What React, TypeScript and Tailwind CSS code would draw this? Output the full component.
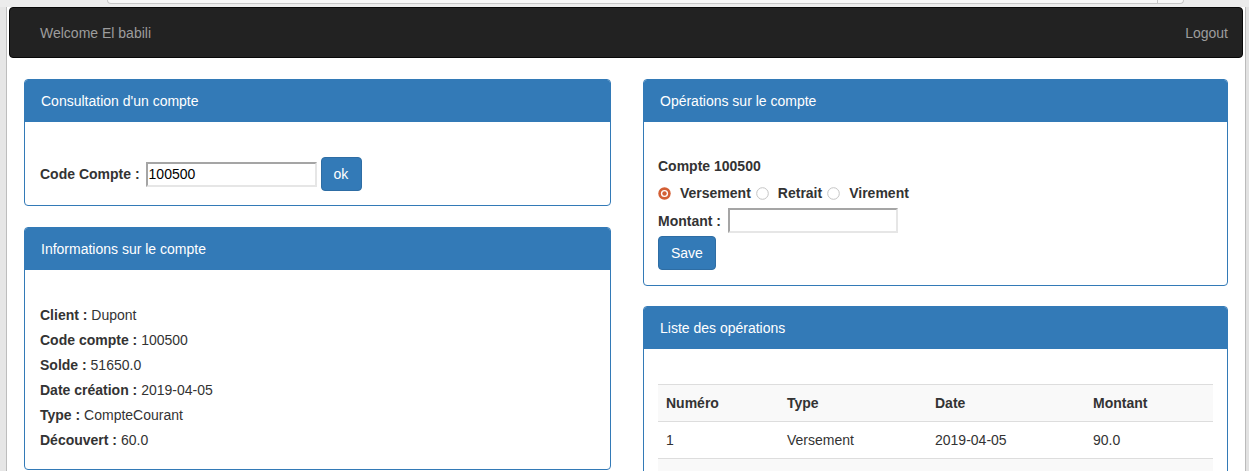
import React from "react";

type Op = { numero: string; type: string; date: string; montant: string };

const infos: { label: string; value: string }[] = [
    { label: "Client", value: "Dupont" },
    { label: "Code compte", value: "100500" },
    { label: "Solde", value: "51650.0" },
    { label: "Date création", value: "2019-04-05" },
    { label: "Type", value: "CompteCourant" },
    { label: "Découvert", value: "60.0" },
];

const operations: Op[] = [{ numero: "1", type: "Versement", date: "2019-04-05", montant: "90.0" }];

function Panel({ title, children, className }: { title: string; children: React.ReactNode; className?: string }) {
    return (
        <div className={"border border-[#337ab7] rounded-[4px] bg-white " + (className ?? "")}>
            <div className="h-[42px] bg-[#337ab7] text-white px-[16px] flex items-center rounded-t-[3px]">
                {title}
            </div>
            {children}
        </div>
    );
}

function Radio({ checked }: { checked?: boolean }) {
    return checked ? (
        <svg width="13" height="13" viewBox="0 0 13 13" className="shrink-0 block">
            <circle cx="6.5" cy="6.5" r="6.2" fill="#d35f35" />
            <circle cx="6.5" cy="6.5" r="3.6" fill="#fff" />
            <circle cx="6.5" cy="6.5" r="2.2" fill="#d35f35" />
        </svg>
    ) : (
        <svg width="13" height="13" viewBox="0 0 13 13" className="shrink-0 block">
            <circle cx="6.5" cy="6.5" r="5.8" fill="#fff" stroke="#c4c4c4" strokeWidth="1" />
        </svg>
    );
}

function TextInput({ value, width }: { value?: string; width: string }) {
    return (
        <div
            className={
                "h-[25px] border-2 border-t-[#a5a5a5] border-l-[#a5a5a5] border-b-[#e6e6e6] border-r-[#e6e6e6] bg-white flex items-center px-[1px] text-[14px] text-black " +
                width
            }
        >
            {value}
        </div>
    );
}

export default function App() {
    return (
        <div className="w-[1249px] h-[471px] overflow-hidden bg-white flex flex-col font-['Liberation_Sans',Arial,sans-serif] text-[14px] text-[#333] leading-[20px]">
            {/* browser chrome top */}
            <div className="h-[7px] bg-[#ececec] shrink-0 flex">
                <div className="ml-[107px] w-[1077px] h-[4px] bg-[#f7f7f7] border border-t-0 border-[#c8c8c8] rounded-b-[4px] flex justify-end">
                    <div className="w-[26px] border-l border-[#c8c8c8]" />
                </div>
            </div>

            <div className="flex flex-1 min-h-0">
                <div className="w-[7px] bg-[#e6e6e6] border-r border-[#bdbdbd] shrink-0" />

                <div className="flex-1 min-w-0">
                    {/* navbar */}
                    <div className="mx-[2px] h-[51px] bg-[#222] border border-[#080808] rounded-[4px] flex items-center justify-between pl-[30px] pr-[14px] text-[#9d9d9d]">
                        <span>Welcome El babili</span>
                        <span>Logout</span>
                    </div>

                    <div className="px-[17px] mt-[21px] flex gap-[32px] items-start">
                        {/* left column */}
                        <div className="w-[587px] flex flex-col gap-[21px]">
                            <Panel title="Consultation d'un compte">
                                <div className="pt-[35px] pb-[14px] px-[15px] flex items-center">
                                    <span className="font-bold mr-[6px]">Code Compte :</span>
                                    <TextInput value="100500" width="w-[171px]" />
                                    <button className="ml-[4px] h-[34px] pl-[12px] pr-[13px] bg-[#337ab7] border border-[#2e6da4] rounded-[4px] text-white">
                                        ok
                                    </button>
                                </div>
                            </Panel>

                            <Panel title="Informations sur le compte">
                                <div className="pt-[33px] pb-[16px] px-[15px]">
                                    {infos.map((i) => (
                                        <div key={i.label} className="leading-[25px]">
                                            <span className="font-bold">{i.label} :</span> {i.value}
                                        </div>
                                    ))}
                                </div>
                            </Panel>
                        </div>

                        {/* right column */}
                        <div className="w-[585px] flex flex-col gap-[20px]">
                            <Panel title="Opérations sur le compte">
                                <div className="pt-[34px] pb-[15px] px-[14px]">
                                    <div className="font-bold">Compte 100500</div>
                                    <div className="mt-[7px] flex items-center font-bold">
                                        <Radio checked />
                                        <span className="ml-[9px]">Versement</span>
                                        <span className="ml-[5px]"><Radio /></span>
                                        <span className="ml-[9px]">Retrait</span>
                                        <span className="ml-[5px]"><Radio /></span>
                                        <span className="ml-[9px]">Virement</span>
                                    </div>
                                    <div className="mt-[5px] flex items-center">
                                        <span className="font-bold mr-[7px]">Montant :</span>
                                        <TextInput width="w-[170px]" />
                                    </div>
                                    <button className="mt-[3px] h-[34px] px-[12px] bg-[#337ab7] border border-[#2e6da4] rounded-[4px] text-white">
                                        Save
                                    </button>
                                </div>
                            </Panel>

                            <Panel title="Liste des opérations">
                                <div className="pt-[35px] px-[14px]">
                                    <table className="w-[555px] border-collapse table-fixed">
                                        <tbody>
                                            <tr className="bg-[#f9f9f9] border-t border-[#ddd]">
                                                <th className="w-[121px] text-left p-[8px]">Numéro</th>
                                                <th className="w-[148px] text-left p-[8px]">Type</th>
                                                <th className="w-[158px] text-left p-[8px]">Date</th>
                                                <th className="text-left p-[8px]">Montant</th>
                                            </tr>
                                            {operations.map((o) => (
                                                <tr key={o.numero} className="border-t border-[#ddd]">
                                                    <td className="p-[8px]">{o.numero}</td>
                                                    <td className="p-[8px]">{o.type}</td>
                                                    <td className="p-[8px]">{o.date}</td>
                                                    <td className="p-[8px]">{o.montant}</td>
                                                </tr>
                                            ))}
                                            <tr className="bg-[#f9f9f9] border-t border-[#ddd]">
                                                <td className="p-[8px]">&nbsp;</td>
                                                <td className="p-[8px]"></td>
                                                <td className="p-[8px]"></td>
                                                <td className="p-[8px]"></td>
                                            </tr>
                                        </tbody>
                                    </table>
                                </div>
                            </Panel>
                        </div>
                    </div>
                </div>

                <div className="w-[4px] bg-[#e2e2e2] border-l border-[#bbb] shrink-0" />
            </div>
        </div>
    );
}
